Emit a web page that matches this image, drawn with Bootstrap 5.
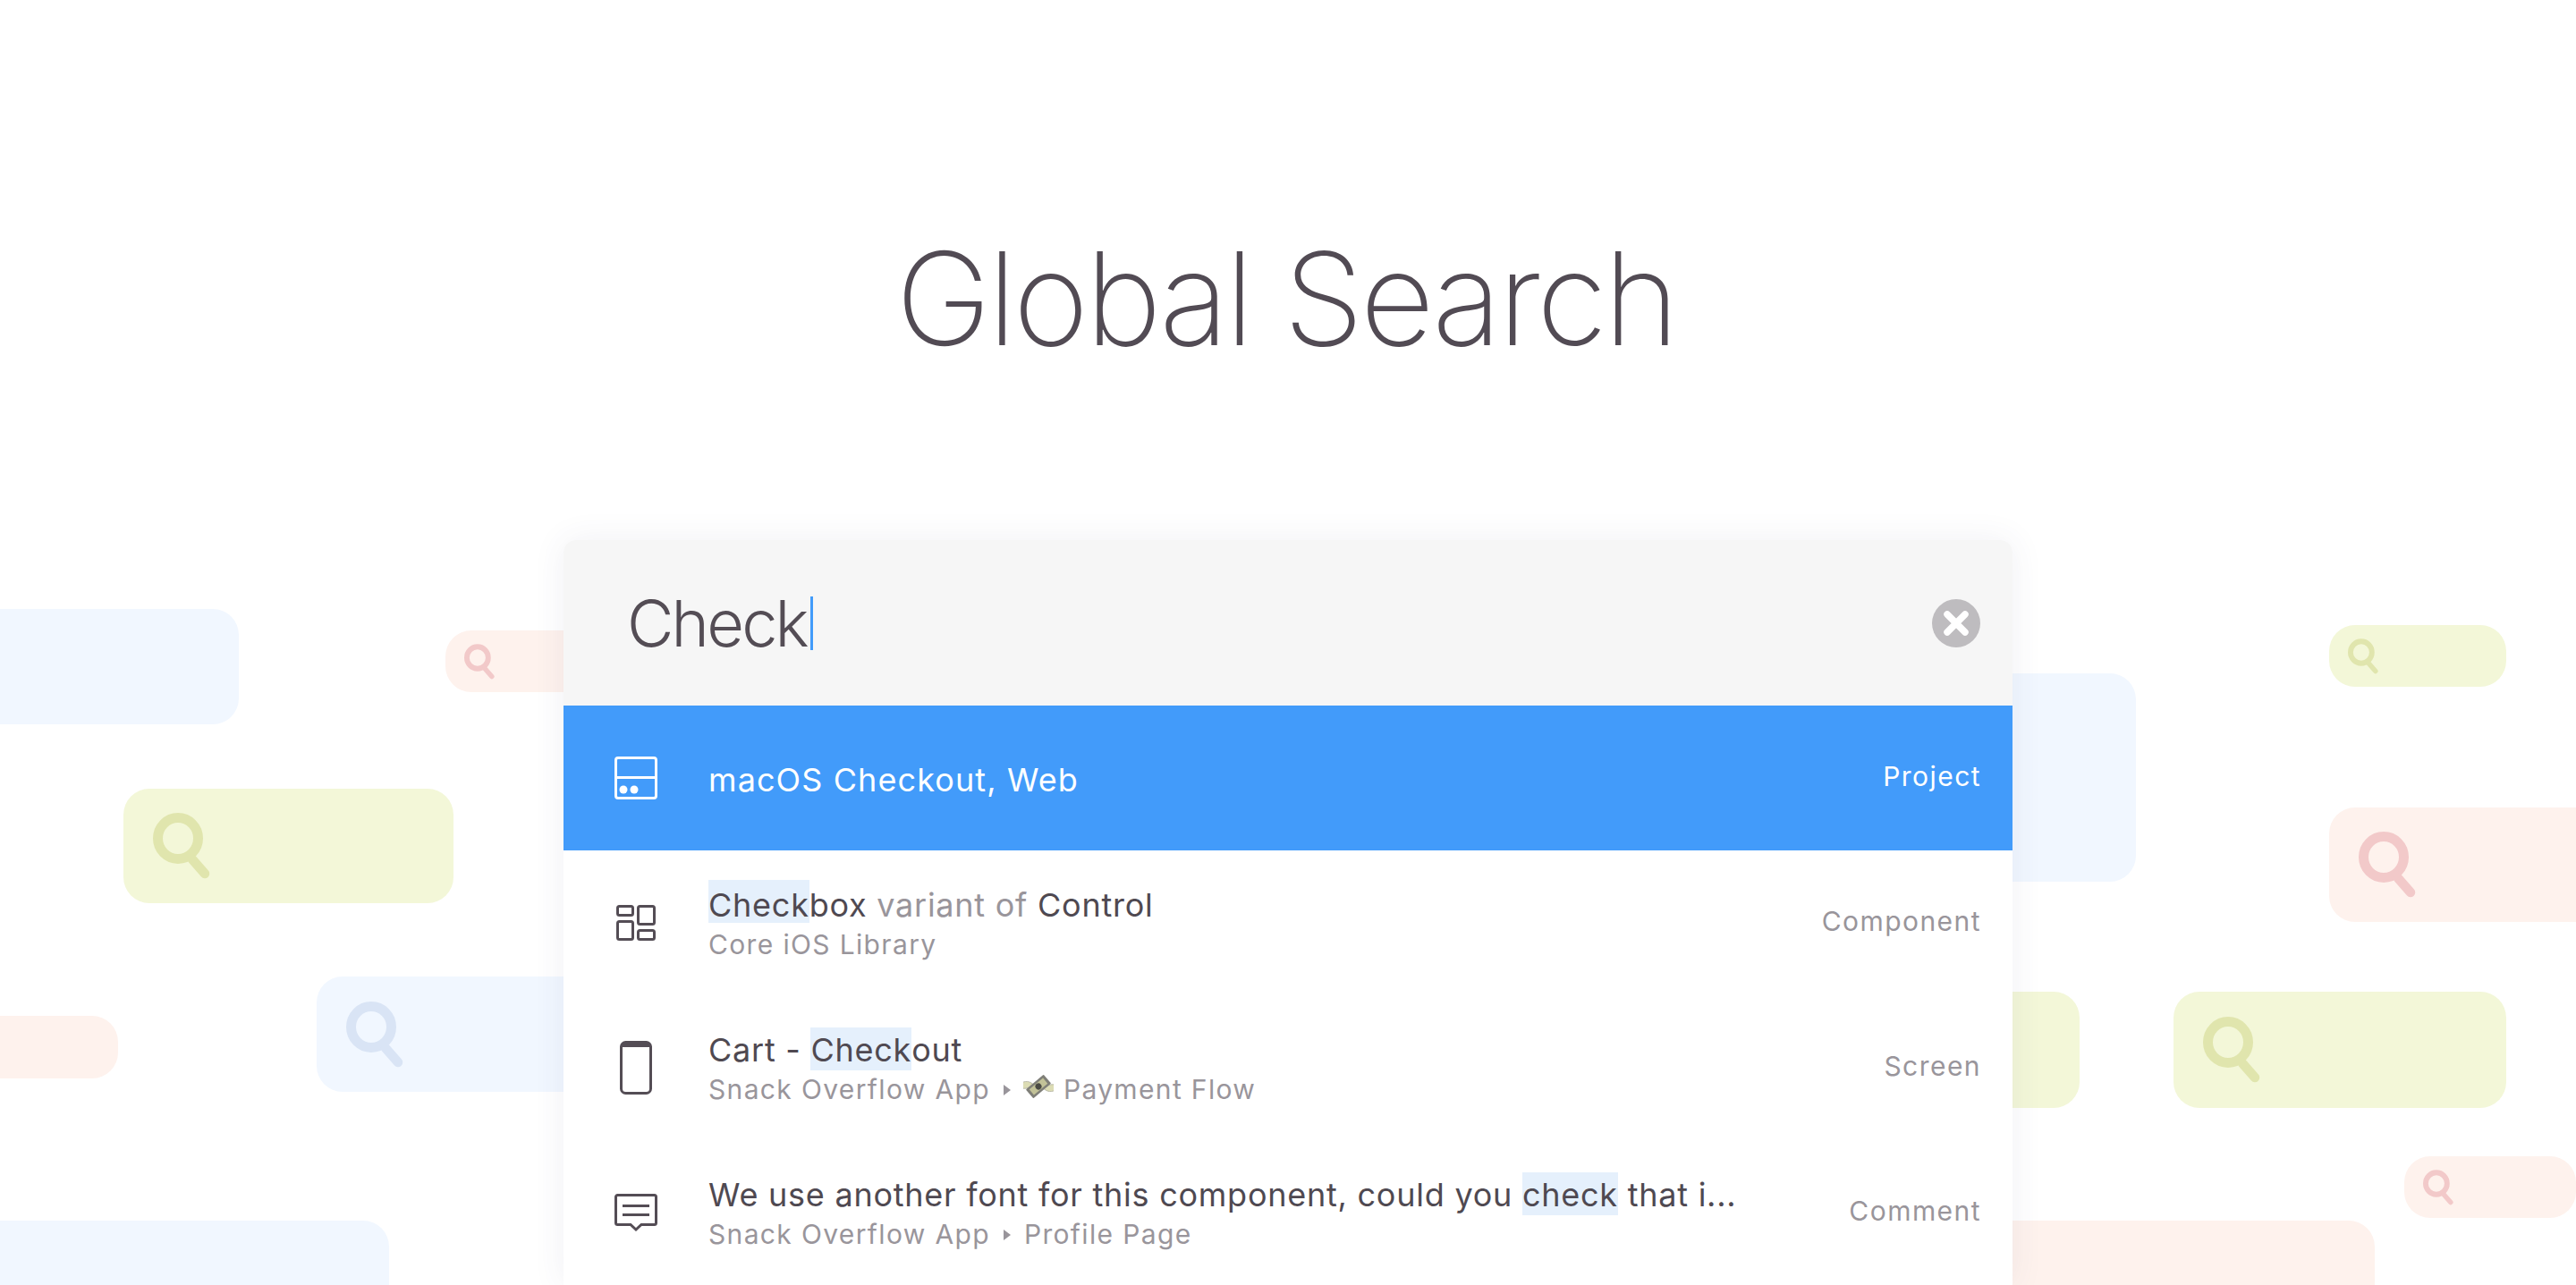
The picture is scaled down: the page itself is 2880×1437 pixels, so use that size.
<!DOCTYPE html>
<html lang="en">
<head>
<meta charset="utf-8">
<title>Global Search</title>
<link href="https://cdn.jsdelivr.net/npm/bootstrap@5.3.0/dist/css/bootstrap.min.css" rel="stylesheet">
<style>
html,body{height:1437px;overflow:hidden;background:#fff}
body{font-family:Inter,"Noto Sans",sans-serif;color:#4f4951;position:relative}
.stage{position:relative;width:2880px;height:1437px;overflow:hidden}
.ghost{position:absolute;display:flex;align-items:center;border-radius:29px}
.ghost svg{display:block;flex:none}
.g-blue{background:#f1f7ff;color:#d9e4f5}
.g-green{background:#f3f7d8;color:#e0e5ad}
.g-peach{background:#fef2ed;color:#f2c9c9}
.big{padding-left:33px}.big svg{width:64px;height:74px}
.tiny{padding-left:21px}.tiny svg{width:34px;height:40px}
.p1{left:-40px;top:681px;width:307px;height:129px}
.p2{left:498px;top:705px;width:200px;height:69px}
.p3{left:138px;top:882px;width:369px;height:128px}
.p4{left:354px;top:1092px;width:340px;height:129px}
.p5{left:-40px;top:1136px;width:172px;height:70px}
.p6{left:-40px;top:1365px;width:475px;height:140px}
.p7{left:2200px;top:753px;width:188px;height:233px}
.p8{left:2604px;top:699px;width:198px;height:69px}
.p9{left:2604px;top:903px;width:320px;height:128px}
.p10{left:2200px;top:1109px;width:125px;height:130px}
.p11{left:2430px;top:1109px;width:372px;height:130px}
.p12{left:2688px;top:1293px;width:192px;height:69px}
.p13{left:2200px;top:1365px;width:455px;height:140px}
.flow{position:relative;z-index:1}
.headline{height:604px;padding:64px 5px 0 0;margin:0;font-size:144px;font-weight:250;color:#524b54;letter-spacing:-3.8px}
.finder{width:1620px;height:833px;border:0;border-radius:14px 14px 0 0;box-shadow:0 0 36px rgba(60,70,110,.08);overflow:hidden}
.query{height:185px;background:#f6f6f6;padding:0 36px 0 71px}
.typed{font-size:72px;font-weight:300;line-height:1;color:#544d55;letter-spacing:-2.8px}
.caret{display:inline-block;width:3px;height:60px;background:#429bfa;margin-left:4px;vertical-align:-4px}
.clearer{width:54px;height:54px;color:#bebcbf}
.hitrow{height:162px;padding:0 35px 0 0;border:0;background:#fff;color:#4f4951}
.hitrow.active{background:#429bfa;color:#fff}
.glyph{width:162px;flex:none}
.glyph svg{display:block}
.line-a{font-size:36px;line-height:48px;white-space:nowrap;letter-spacing:.75px}
.solo{margin-top:3px;letter-spacing:1.1px}
.duo{line-height:56px;height:48px}
.line-b{font-size:30px;line-height:48px;color:#99959b;white-space:nowrap;letter-spacing:1.35px;display:flex;align-items:center}
.hit{display:inline-block;background:#e5f0fc;height:48px}
.hit-low{height:51px;background:linear-gradient(#e5f0fc,#e5f0fc) 0 3px/100% 48px no-repeat}
.dim{color:#99959b}
.kind{font-size:30px;line-height:36px;color:#99959b;letter-spacing:1.45px;margin-bottom:4px}
.hitrow.active .kind{color:#fff}
.sep{display:inline-block;width:0;height:0;border-left:8px solid #99959b;border-top:6px solid transparent;border-bottom:6px solid transparent;margin:2px 15px 0 15px}
.wings{display:block;width:34px;height:30px;margin:-6px 11px 0 -1px}
</style>
</head>
<body>
<svg width="0" height="0" class="position-absolute">
  <symbol id="mag" viewBox="0 0 64 74">
    <ellipse cx="28" cy="28.5" rx="22.5" ry="23" fill="none" stroke="currentColor" stroke-width="11"/>
    <path d="M44 52 58 68" fill="none" stroke="currentColor" stroke-width="10.5" stroke-linecap="round"/>
  </symbol>
</svg>
<div class="stage">
  <div class="ghost g-blue p1"></div>
  <div class="ghost g-peach p2 tiny"><svg><use href="#mag"/></svg></div>
  <div class="ghost g-green p3 big"><svg><use href="#mag"/></svg></div>
  <div class="ghost g-blue p4 big"><svg><use href="#mag"/></svg></div>
  <div class="ghost g-peach p5"></div>
  <div class="ghost g-blue p6"></div>
  <div class="ghost g-blue p7"></div>
  <div class="ghost g-green p8 tiny"><svg><use href="#mag"/></svg></div>
  <div class="ghost g-peach p9 big"><svg><use href="#mag"/></svg></div>
  <div class="ghost g-green p10"></div>
  <div class="ghost g-green p11 big"><svg><use href="#mag"/></svg></div>
  <div class="ghost g-peach p12 tiny"><svg><use href="#mag"/></svg></div>
  <div class="ghost g-peach p13"></div>

  <div class="flow">
    <h1 class="headline d-flex align-items-center justify-content-center">Global Search</h1>
    <div class="card finder mx-auto">
      <div class="query d-flex align-items-center justify-content-between">
        <div class="typed">Check<span class="caret"></span></div>
        <svg class="clearer" viewBox="0 0 54 54"><circle cx="27" cy="27" r="27" fill="currentColor"/><path d="M17 17 37 37M37 17 17 37" stroke="#fff" stroke-width="7.5" stroke-linecap="round"/></svg>
      </div>
      <div class="list-group list-group-flush">
        <div class="list-group-item hitrow active d-flex align-items-center">
          <div class="glyph d-flex justify-content-center">
            <svg width="48" height="48" viewBox="0 0 48 48" fill="none" stroke="#fff" stroke-width="3"><rect x="1.5" y="1.5" width="45" height="45" rx="2.5"/><path d="M1.5 23.5H46.5"/><circle cx="10" cy="37" r="4.5" fill="#fff" stroke="none"/><circle cx="22" cy="37" r="4.5" fill="#fff" stroke="none"/></svg>
          </div>
          <div class="line-a solo flex-grow-1">macOS Checkout, Web</div>
          <div class="kind">Project</div>
        </div>
        <div class="list-group-item hitrow d-flex align-items-center">
          <div class="glyph d-flex justify-content-center">
            <svg width="44" height="40" viewBox="0 0 44 40" fill="none" stroke="#544d55" stroke-width="3"><rect x="1.5" y="1.5" width="17" height="10" rx="2"/><rect x="24.5" y="1.5" width="18" height="20" rx="2"/><rect x="1.5" y="18.5" width="17" height="20" rx="2"/><rect x="24.5" y="28.5" width="18" height="10" rx="2"/></svg>
          </div>
          <div class="flex-grow-1">
            <div class="line-a duo"><span class="hit">Check</span>box <span class="dim">variant of</span> Control</div>
            <div class="line-b">Core iOS Library</div>
          </div>
          <div class="kind">Component</div>
        </div>
        <div class="list-group-item hitrow d-flex align-items-center">
          <div class="glyph d-flex justify-content-center">
            <svg width="36" height="60" viewBox="0 0 36 60" fill="none" stroke="#544d55" stroke-width="3"><rect x="1.5" y="1.5" width="33" height="57" rx="5"/><path d="M3 4.5H33" stroke-width="5"/></svg>
          </div>
          <div class="flex-grow-1">
            <div class="line-a duo">Cart - <span class="hit hit-low">Check</span>out</div>
            <div class="line-b">Snack Overflow App<span class="sep"></span>
              <svg class="wings" viewBox="0 0 34 30"><g transform="rotate(-40 17 15)"><path d="M9 9C3 8 0 4 2 0c5-1 11 2 12 9zM25 21c6 1 9 5 7 9-5 1-11-2-12-9z" fill="#dcdcb4" stroke="#b4b4a4" stroke-width=".8"/><rect x="4" y="8.500" width="26" height="13" rx="1" fill="#7f7f78"/><rect x="7" y="11" width="20" height="8" fill="#c2c298"/><circle cx="17" cy="15" r="3.500" fill="#4a4a44"/></g></svg>Payment Flow</div>
          </div>
          <div class="kind">Screen</div>
        </div>
        <div class="list-group-item hitrow d-flex align-items-center">
          <div class="glyph d-flex justify-content-center">
            <svg width="48" height="42" viewBox="0 0 48 42" fill="none" stroke="#544d55" stroke-width="3"><path d="M3.500 1.500H44.500a2 2 0 0 1 2 2V32.500a2 2 0 0 1-2 2H30L24 40 18 34.500H3.500a2 2 0 0 1-2-2V3.500a2 2 0 0 1 2-2z"/><path d="M9 13.500H39M9 23.500H39"/></svg>
          </div>
          <div class="flex-grow-1">
            <div class="line-a duo">We use another font for this component, could you <span class="hit hit-low">check</span> that i...</div>
            <div class="line-b">Snack Overflow App<span class="sep"></span>Profile Page</div>
          </div>
          <div class="kind">Comment</div>
        </div>
      </div>
    </div>
  </div>
</div>
<script src="https://cdn.jsdelivr.net/npm/bootstrap@5.3.0/dist/js/bootstrap.bundle.min.js"></script>
</body>
</html>
